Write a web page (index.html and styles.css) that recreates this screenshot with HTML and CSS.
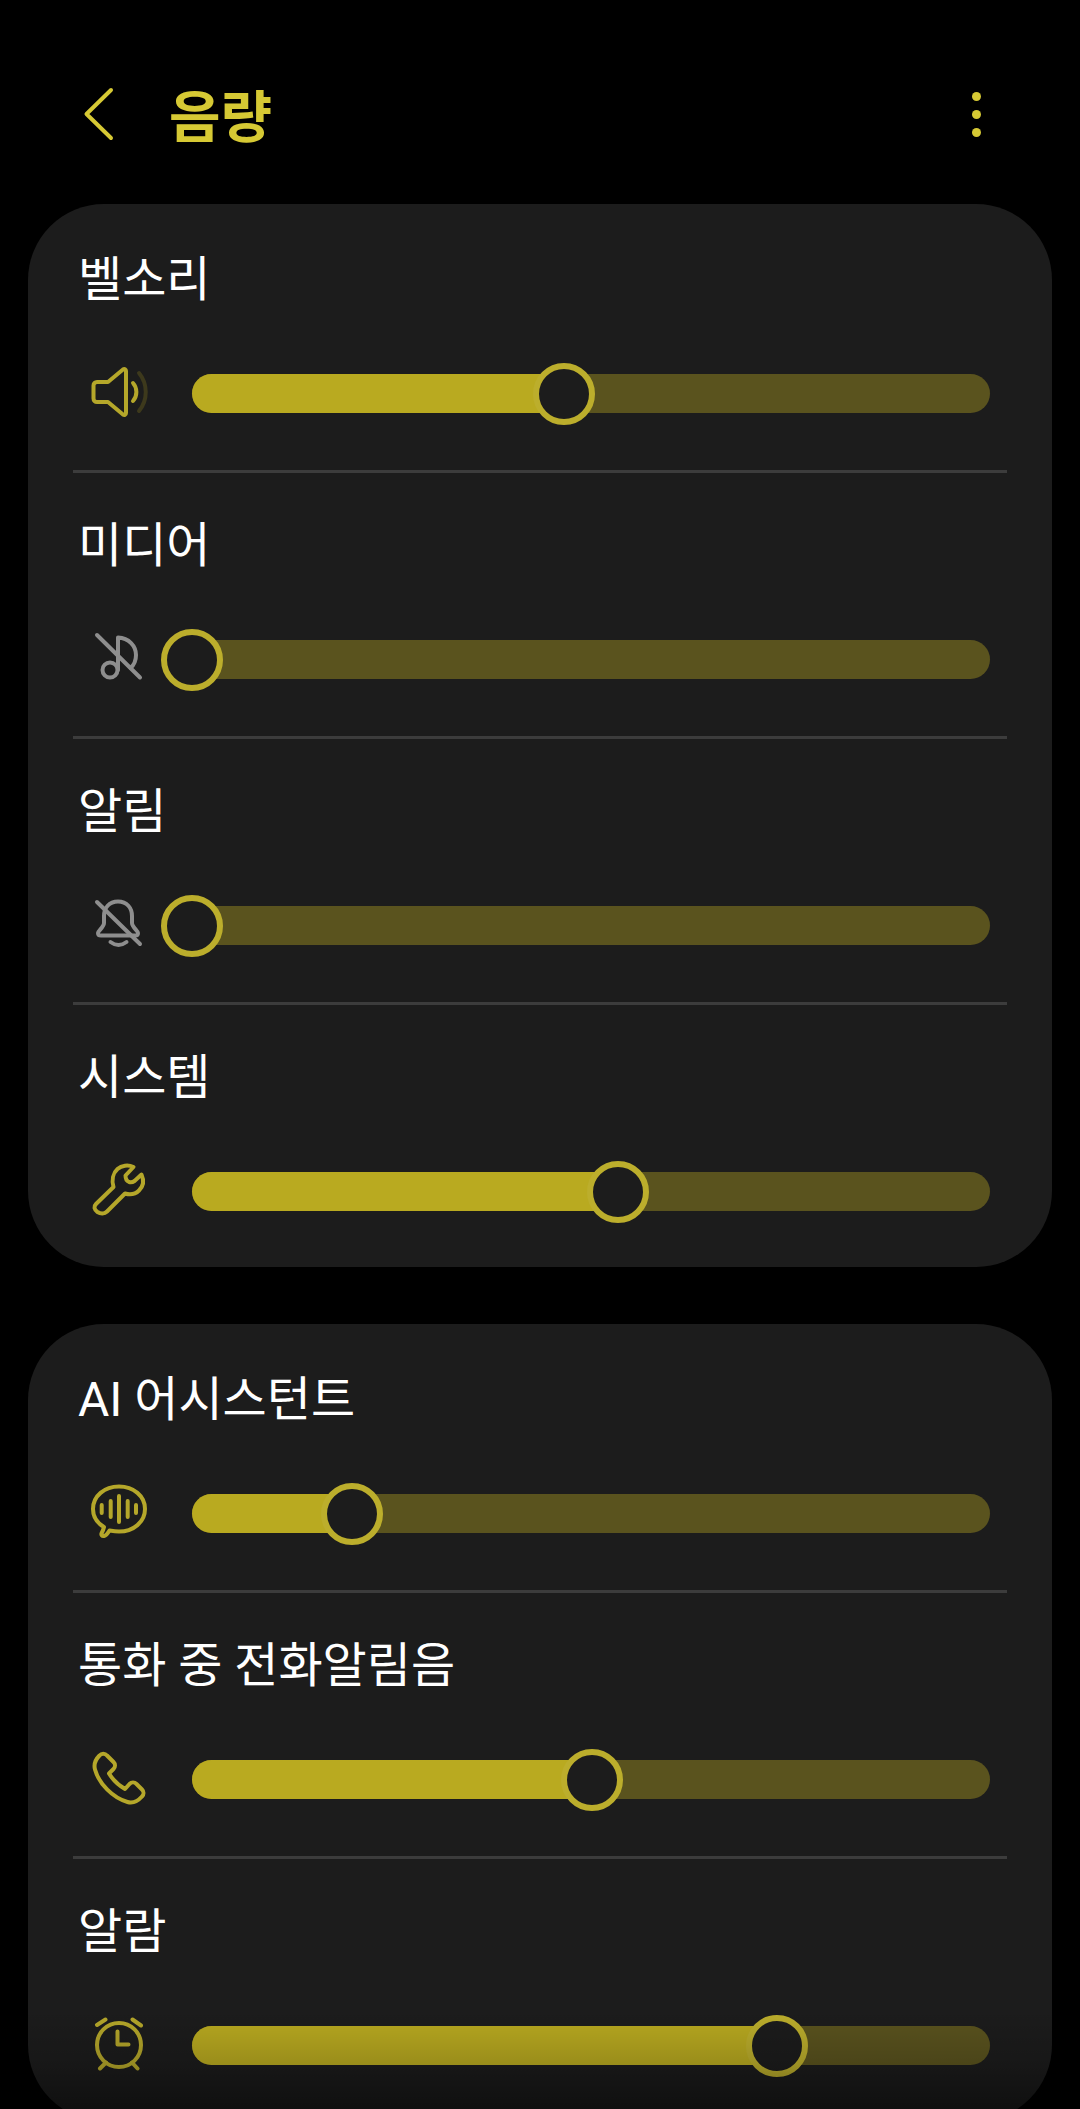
FILE: index.html
```html
<!DOCTYPE html>
<html lang="ko">
<head>
    <meta charset="UTF-8">
    <meta name="viewport" content="width=device-width, initial-scale=1.0">
    <title>음량</title>
    <link rel="stylesheet" href="styles.css">
</head>
<body>
    <header class="app-bar">
        <svg class="back-icon" width="40" height="64" viewBox="0 0 40 64">
            <path d="M31 8 L6.5 32 L31 56"/>
        </svg>
        <h1>음량</h1>
        <div class="more-menu"><span></span><span></span><span></span></div>
    </header>

    <section class="card">
        <div class="row">
            <h2>벨소리</h2>
            <div class="slider-row">
                <svg class="icon" width="64" height="64" viewBox="0 0 64 64">
                    <path d="M37 7.5 C38.5 6.5 40 7.5 40 9 V51 C40 52.5 38.5 53.5 37 52.5 L22 40 H11 C9 40 7.5 38.5 7.5 36.5 V23.5 C7.5 21.5 9 20 11 20 H22 Z"/>
                    <path d="M47 21 C51.5 26 51.5 34 47 39"/>
                    <path class="dim" d="M53 11 C62 22 62 38 53 49"/>
                </svg>
                <div class="track"><div class="fill" style="width: 46.6%"><span class="thumb"></span></div></div>
            </div>
        </div>
        <div class="row">
            <h2>미디어</h2>
            <div class="slider-row">
                <svg class="icon muted" width="64" height="64" viewBox="0 0 64 64">
                    <circle cx="24" cy="42" r="7.5"/>
                    <path d="M32 42 V9.5 C43 10 50 18 50 27 C50 32 48 37 44.5 40"/>
                    <path d="M11 7 L54 49.5"/>
                </svg>
                <div class="track"><div class="fill" style="width: 0%"><span class="thumb"></span></div></div>
            </div>
        </div>
        <div class="row">
            <h2>알림</h2>
            <div class="slider-row">
                <svg class="icon muted" width="64" height="64" viewBox="0 0 64 64">
                    <path d="M32 7.5 C23 7.5 18 14 18 22 V29 C18 33 12 37 12 39 C12 41 13 41.5 15 41.5 H49 C51 41.5 52 41 52 39 C52 37 46 33 46 29 V22 C46 14 41 7.5 32 7.5 Z"/>
                    <path d="M24.5 48 Q32.5 54 40.5 48"/>
                    <path d="M11 8 L54 50"/>
                </svg>
                <div class="track"><div class="fill" style="width: 0%"><span class="thumb"></span></div></div>
            </div>
        </div>
        <div class="row">
            <h2>시스템</h2>
            <div class="slider-row">
                <svg class="icon" width="64" height="64" viewBox="0 0 64 64">
                    <path d="M10 44 L27.5 27 C25.5 20 27 13 31.5 9 C35.5 5.5 42 4.5 47.5 7 L39.5 15.5 C39.5 18 40.5 21 43 22 C45 22.5 47 22 48.5 21 L55.5 14.5 C58 20 57.5 26 53 30.5 C49 34.5 44 35 39 33.5 L21 51.5 C18.5 54 14.5 54 11.5 52 C8 49.5 7.5 46.5 10 44 Z"/>
                </svg>
                <div class="track"><div class="fill" style="width: 53.4%"><span class="thumb"></span></div></div>
            </div>
        </div>
    </section>

    <section class="card">
        <div class="row">
            <h2>AI 어시스턴트</h2>
            <div class="slider-row">
                <svg class="icon" width="64" height="64" viewBox="0 0 64 64">
                    <path d="M18 45 C11 41 7 35 7 27 C7 14 18.5 4.5 33 4.5 C47.5 4.5 59 14 59 27 C59 40 47.5 49.5 33 49.5 C29.5 49.5 26.5 49 23.5 48.5 C22 51 20 53.5 18 54 C16 54.5 15 53 15.5 51.5 C16.5 49.5 17.5 47.5 18 45 Z"/>
                    <path d="M15.7 23 V31 M24.7 19 V35 M33 14 V40 M41.7 19 V35 M50 23 V31"/>
                </svg>
                <div class="track"><div class="fill" style="width: 20%"><span class="thumb"></span></div></div>
            </div>
        </div>
        <div class="row">
            <h2>통화 중 전화알림음</h2>
            <div class="slider-row">
                <svg class="icon" width="64" height="64" viewBox="0 0 64 64">
                    <path d="M13.5 7.5 C15.5 5 19 5 21 7.5 L27.5 14 C29.5 16 29.5 19 27.5 21 L23 25.5 C27 32 32 37 39 41 L43.5 36 C45.5 34 48.5 34 50.5 36 L56 41.5 C58 43.5 58 46.5 56 48.5 C52 53 47 55.5 41.5 54 C27 50 13 36 9 21.5 C7.5 16 9.5 11.5 13.5 7.5 Z"/>
                </svg>
                <div class="track"><div class="fill" style="width: 50.1%"><span class="thumb"></span></div></div>
            </div>
        </div>
        <div class="row">
            <h2>알람</h2>
            <div class="slider-row">
                <svg class="icon" width="64" height="64" viewBox="0 0 64 64">
                    <circle cx="33" cy="31" r="22"/>
                    <path d="M31.5 17.5 V30.5 H42.5"/>
                    <path d="M11 11 L19.5 5.5 M46.5 5.5 L55 11.5 M14 54.5 L20 48.5 M46 48.5 L51.5 54.5"/>
                </svg>
                <div class="track"><div class="fill" style="width: 73.3%"><span class="thumb"></span></div></div>
            </div>
        </div>
    </section>

    <div class="bottom-fade"></div>
</body>
</html>
```

FILE: styles.css
```css
:root {
    --accent-color: #d6c934;
    --fill-color: #b9aa20;
    --icon-color: #b5a72a;
    --track-color: #5a531e;
    --card-color: #1c1c1c;
    --divider-color: #3c3c3c;
    --muted-color: #8e8e8e;
}

html, body {
    height: 2109px;
    overflow: hidden;
}

body {
    position: relative;
    margin: 0;
    padding: 0;
    background-color: #000;
    color: #fff;
    font-family: "Noto Sans CJK KR", "Noto Sans", sans-serif;
}

.app-bar {
    display: flex;
    align-items: center;
    box-sizing: border-box;
    height: 204px;
    padding: 24px 0 0 80px;
}

.back-icon {
    fill: none;
    stroke: var(--accent-color);
    stroke-width: 4;
    stroke-linecap: round;
    stroke-linejoin: round;
}

.app-bar h1 {
    flex: 1;
    margin: -2px 0 0 49px;
    color: var(--accent-color);
    font-size: 56px;
    font-weight: 700;
    line-height: 64px;
}

.more-menu {
    display: flex;
    flex-direction: column;
    gap: 9px;
    margin-right: 99px;
}

.more-menu span {
    width: 9px;
    height: 9px;
    border-radius: 50%;
    background-color: var(--accent-color);
}

.card {
    margin: 0 28px 57px;
    padding: 3px 45px 0;
    background-color: var(--card-color);
    border-radius: 76px;
}

.row {
    padding: 41px 0 45px;
    border-bottom: 3px solid var(--divider-color);
}

.row:last-child {
    padding-bottom: 44px;
    border-bottom: none;
}

.row h2 {
    margin: 0 0 51px 5px;
    font-family: Roboto, "Noto Sans CJK KR", sans-serif;
    font-size: 48px;
    font-weight: 400;
    line-height: 64px;
}

.slider-row {
    display: flex;
    align-items: center;
    gap: 42px;
    height: 62px;
    padding: 0 17px 0 13px;
}

.icon {
    flex: none;
    fill: none;
    stroke: var(--icon-color);
    stroke-width: 4;
    stroke-linecap: round;
    stroke-linejoin: round;
}

.icon.muted {
    stroke: var(--muted-color);
}

.icon .dim {
    stroke: #3d391c;
}

.track {
    flex: 1;
    align-self: flex-start;
    height: 39px;
    margin-top: 11px;
    background-color: var(--track-color);
    border-radius: 20px;
}

.fill {
    position: relative;
    height: 100%;
    background-color: var(--fill-color);
    border-radius: 20px 0 0 20px;
}

.thumb {
    position: absolute;
    top: -11px;
    right: -31px;
    box-sizing: border-box;
    width: 62px;
    height: 62px;
    background-color: var(--card-color);
    border: 6px solid #bcae2c;
    border-radius: 50%;
}

.bottom-fade {
    position: absolute;
    left: 0;
    right: 0;
    top: 2009px;
    height: 100px;
    background: linear-gradient(to bottom, rgba(0, 0, 0, 0), rgba(0, 0, 0, 0.17) 55%, rgba(0, 0, 0, 0.45));
}
```
